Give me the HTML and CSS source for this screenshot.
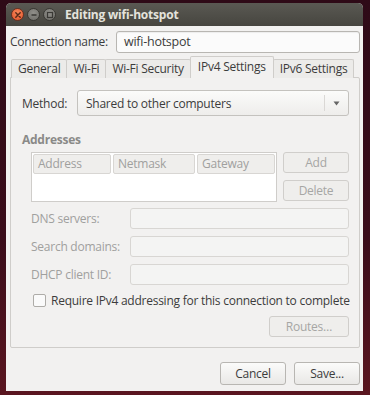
FILE: index.html
```html
<!DOCTYPE html>
<html>
<head>
<meta charset="utf-8">
<link rel="stylesheet" href="styles.css">
</head>
<body>
<div class="window">
  <div class="titlebar">
    <div class="wbtns">
      <span class="wb close"><svg width="8" height="8" viewBox="0 0 8 8"><path d="M1.8 1.8 L6.2 6.2 M6.2 1.8 L1.8 6.2" stroke="#5a2a18" stroke-width="1.5" stroke-linecap="round"/></svg></span>
      <span class="wb"><svg width="8" height="8" viewBox="0 0 8 8"><path d="M1.5 4 H6.5" stroke="#3a3935" stroke-width="1.4"/></svg></span>
      <span class="wb"><svg width="8" height="8" viewBox="0 0 8 8"><rect x="1.5" y="1.5" width="5" height="5" fill="none" stroke="#3a3935" stroke-width="1.2"/></svg></span>
    </div>
    <div class="title">Editing wifi-hotspot</div>
  </div>
  <div class="content">
    <div class="namerow">
      <span class="label">Connection name:</span>
      <div class="entry name">wifi-hotspot</div>
    </div>
    <div class="tabs">
      <div class="tab">General</div>
      <div class="tab">Wi-Fi</div>
      <div class="tab">Wi-Fi Security</div>
      <div class="tab active">IPv4 Settings</div>
      <div class="tab">IPv6 Settings</div>
    </div>
    <div class="panel">
      <div class="methodrow">
        <span class="label">Method:</span>
        <div class="combo"><span>Shared to other computers</span><span class="arrow"><svg width="7" height="5" viewBox="0 0 7 5"><path d="M0.5 0.5 H6.5 L3.5 4.5 Z" fill="#666"/></svg></span></div>
      </div>
      <div class="section">Addresses</div>
      <div class="addrrow">
        <div class="table">
          <div class="thead">
            <div class="th">Address</div>
            <div class="th">Netmask</div>
            <div class="th">Gateway</div>
          </div>
        </div>
        <div class="sidebtns">
          <div class="btn dis">Add</div>
          <div class="btn dis">Delete</div>
        </div>
      </div>
      <div class="form">
        <span class="flabel">DNS servers:</span><div class="entry dis"></div>
        <span class="flabel">Search domains:</span><div class="entry dis"></div>
        <span class="flabel">DHCP client ID:</span><div class="entry dis"></div>
      </div>
      <div class="checkrow">
        <span class="check"></span>
        <span>Require IPv4 addressing for this connection to complete</span>
      </div>
      <div class="routesrow"><div class="btn dis routes">Routes…</div></div>
    </div>
    <div class="footer">
      <div class="btn act cancel">Cancel</div>
      <div class="btn act save">Save...</div>
    </div>
  </div>
</div>
</body>
</html>
```
FILE: styles.css
```css
* { box-sizing: border-box; }
html, body { margin: 0; padding: 0; }
body {
  width: 370px; height: 395px; overflow: hidden;
  background: linear-gradient(180deg, #2e0a17 0%, #3a0c1a 60%, #5a1620 100%);
  font-family: "Open Sans", "Noto Sans", sans-serif;
  font-size: 12px;
  letter-spacing: -0.25px;
  color: #3c3c3c;
  white-space: nowrap;
}
.window {
  margin: 3px 7px 0 6px;
  width: 357px;
  height: 388px;
  border-radius: 5px 5px 0 0;
  overflow: hidden;
  display: flex; flex-direction: column;
  background: #f2f1f0;
}
.titlebar {
  height: 23px;
  flex: none;
  background: linear-gradient(180deg, #5a5953 0%, #46453f 100%);
  display: flex; align-items: center;
  padding-left: 5px;
}
.wbtns { display: flex; gap: 3px; }
.wb {
  width: 13px; height: 13px; border-radius: 50%;
  background: radial-gradient(circle at 50% 35%, #908f8a, #6c6b66);
  border: 1px solid #3a3934;
  display: flex; align-items: center; justify-content: center;
}
.wb.close { background: radial-gradient(circle at 50% 35%, #f8875a, #e0522a); border-color: #6a3020; }
.title {
  margin-left: 9px;
  color: #e4e3dc;
  font-weight: bold;
  font-size: 12px;
  letter-spacing: -0.2px;
}
.content { flex: 1; display: flex; flex-direction: column; padding: 4px 3px 0 4px; }
.namerow { display: flex; align-items: center; height: 23px; }
.namerow .label { width: 106px; color: #3c3c3c; }
.entry {
  height: 22px;
  border: 1px solid #b8b6b2;
  border-radius: 3px;
  background: #fbfbfb;
  box-shadow: inset 0 1px 1px rgba(0,0,0,0.06);
  padding: 2px 7px;
}
.entry.name { flex: 1; color: #3c3c3c; line-height: 16px; font-size: 12.5px; }
.tabs { display: flex; align-items: flex-end; margin-top: 3px; height: 22px; position: relative; z-index: 1; }
.tab {
  height: 19px;
  border: 1px solid #cfcdca;
  border-bottom: none;
  border-radius: 2px 2px 0 0;
  background: #ecebe9;
  padding: 0 6px;
  line-height: 18px;
  color: #3c3c3c;
  margin-right: -1px;
}
.tab:first-child { margin-left: 1px; }
.tab.active { height: 22px; background: #f2f1f0; line-height: 20px; padding: 0 7px; }
.panel {
  border: 1px solid #cfcdca;
  border-radius: 0 2px 2px 2px;
  margin-top: -1px;
  height: 271px;
  padding: 12px 10px 0 11px;
  display: flex; flex-direction: column;
}
.methodrow { display: flex; align-items: center; }
.methodrow .label { width: 55px; }
.combo {
  flex: 1; height: 26px;
  border: 1px solid #c4c2be; border-radius: 3px;
  background: linear-gradient(180deg, #fbfbfa, #eeedeb);
  display: flex; align-items: center; justify-content: space-between;
  padding: 0 8px 0 8px;
}
.arrow { display: flex; align-items: center; border-left: 1px solid #dad8d5; height: 16px; padding-left: 8px; }
.section { font-weight: bold; color: #8a8a88; margin-top: 16px; height: 20px; line-height: 16px; }
.addrrow { display: flex; margin-left: 9px; gap: 6px; }
.table { width: 246px; height: 50px; border: 1px solid #cfcdca; background: #fff; padding: 1px; }
.thead { display: flex; gap: 2px; }
.th {
  height: 20px; border: 1px solid #d8d6d3; border-radius: 2px;
  background: #efeeec; color: #a0a09e; padding-left: 4px; line-height: 18px;
}
.th:nth-child(1) { width: 78px; }
.th:nth-child(2) { width: 82px; }
.th:nth-child(3) { width: 78px; }
.sidebtns { display: flex; flex-direction: column; gap: 7px; width: 66px; }
.btn {
  height: 21px; border: 1px solid #d0cecb; border-radius: 3px;
  display: flex; align-items: center; justify-content: center;
  background: #efeeec;
}
.btn.dis { color: #a6a6a4; }
.form {
  display: grid; grid-template-columns: 99px 1fr; row-gap: 7px;
  margin-top: 6px; margin-left: 9px; align-items: center;
}
.flabel { color: #a0a09e; }
.entry.dis { height: 21px; border-color: #d8d6d3; background: #f4f4f3; box-shadow: none; }
.checkrow { display: flex; align-items: center; margin-top: 8px; margin-left: 11px; gap: 5px; color: #3c3c3c; height: 14px; }
.check { width: 13px; height: 13px; border: 1px solid #aeaca8; border-radius: 2px; background: #fafafa; flex: none; }
.routesrow { display: flex; justify-content: flex-end; margin-top: 9px; }
.routes { width: 80px; }
.footer { display: flex; justify-content: flex-end; gap: 8px; margin-top: 14px; }
.btn.act {
  width: 66px; height: 23px; color: #3c3c3c;
  border-color: #b8b6b2;
  background: linear-gradient(180deg, #fbfbfa, #e9e8e6);
}
.save { width: 65px; }
```
